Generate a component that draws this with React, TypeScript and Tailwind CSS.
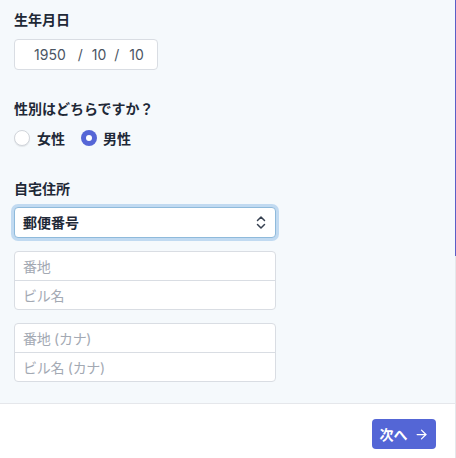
import { ArrowRight } from 'lucide-react';

const FONT = 'font-[Inter,"Noto_Sans_CJK_JP",sans-serif]';

function AddressGroup({ first, second }: { first: string; second: string }) {
  return (
    <div className="w-[262px] rounded-[4px] border border-[#d9dde3] bg-white">
      <input
        placeholder={first}
        className="block h-[28px] w-full rounded-t-[4px] px-[8px] text-[14px] tracking-[-0.02em] text-gray-700 outline-none placeholder:text-[#a3a9b3]"
      />
      <div className="h-px bg-[#d9dde3]" />
      <input
        placeholder={second}
        className="block h-[28px] w-full rounded-b-[4px] px-[8px] text-[14px] tracking-[-0.02em] text-gray-700 outline-none placeholder:text-[#a3a9b3]"
      />
    </div>
  );
}

export default function App() {
  return (
    <div className={`flex h-[458px] w-[456px] ${FONT}`}>
      <div className="flex w-[455px] flex-col">
        <div className="flex h-[403px] flex-col bg-[#f5f9fc] pl-[14px] pt-[10px]">
          <h2 className="text-[14px] font-bold leading-5 text-[#1f2937]">生年月日</h2>
          <div className="mt-[9px] flex h-[31px] w-[144px] items-center rounded-[4px] border border-[#d9dde3] bg-white text-[14px] text-[#4b5563]">
            <span className="ml-[19px]">1950</span>
            <span className="ml-[12px]">/</span>
            <span className="ml-[9px]">10</span>
            <span className="ml-[8px]">/</span>
            <span className="ml-[10px]">10</span>
          </div>

          <h2 className="mt-[29px] text-[14px] font-bold leading-5 text-[#1f2937]">性別はどちらですか？</h2>
          <div className="mt-[9px] flex h-5 items-center text-[14px] font-semibold text-[#1f2937]">
            <label className="flex items-center">
              <span className="h-4 w-4 rounded-full border border-[#d1d5db] bg-white shadow-[0_1px_1px_rgba(0,0,0,0.08)]" />
              <span className="ml-[7px]">女性</span>
            </label>
            <label className="ml-[16px] flex items-center">
              <span className="flex h-4 w-4 items-center justify-center rounded-full bg-[#5566d6]">
                <span className="h-[6px] w-[6px] rounded-full bg-white" />
              </span>
              <span className="ml-[6px]">男性</span>
            </label>
          </div>

          <h2 className="mt-[31px] text-[14px] font-bold leading-5 text-[#1f2937]">自宅住所</h2>
          <div className="mt-[8px] flex h-[31px] w-[262px] items-center justify-between rounded-[4px] border border-[#8fbadb] bg-white pl-[8px] pr-[9px] shadow-[0_0_0_3px_rgba(164,202,235,0.65)]">
            <span className="text-[14px] font-bold text-[#1f2937]">郵便番号</span>
            <svg width="10" height="15" viewBox="0 0 10 15" fill="none" stroke="#374151" strokeWidth="1.5" strokeLinecap="round" strokeLinejoin="round">
              <path d="M1.5 5.5 5 2l3.5 3.5" />
              <path d="M1.5 9.5 5 13l3.5-3.5" />
            </svg>
          </div>

          <div className="mt-[13px]">
            <AddressGroup first="番地" second="ビル名" />
          </div>
          <div className="mt-[13px]">
            <AddressGroup first="番地 (カナ)" second="ビル名 (カナ)" />
          </div>
        </div>
        <div className="flex flex-1 items-start justify-end border-t border-[#e5e7eb] bg-white pr-[19px] pt-[15px]">
          <button className="flex h-[30px] w-[64px] items-center justify-center gap-[6px] rounded-[4px] bg-[#5466d6] text-[14px] font-bold text-white">
            次へ
            <ArrowRight size={15} strokeWidth={2} />
          </button>
        </div>
      </div>
      <div className="flex w-px flex-col">
        <div className="h-[256px] bg-[#5b5fc7]" />
        <div className="flex-1 bg-[#e5e7eb]" />
      </div>
    </div>
  );
}
